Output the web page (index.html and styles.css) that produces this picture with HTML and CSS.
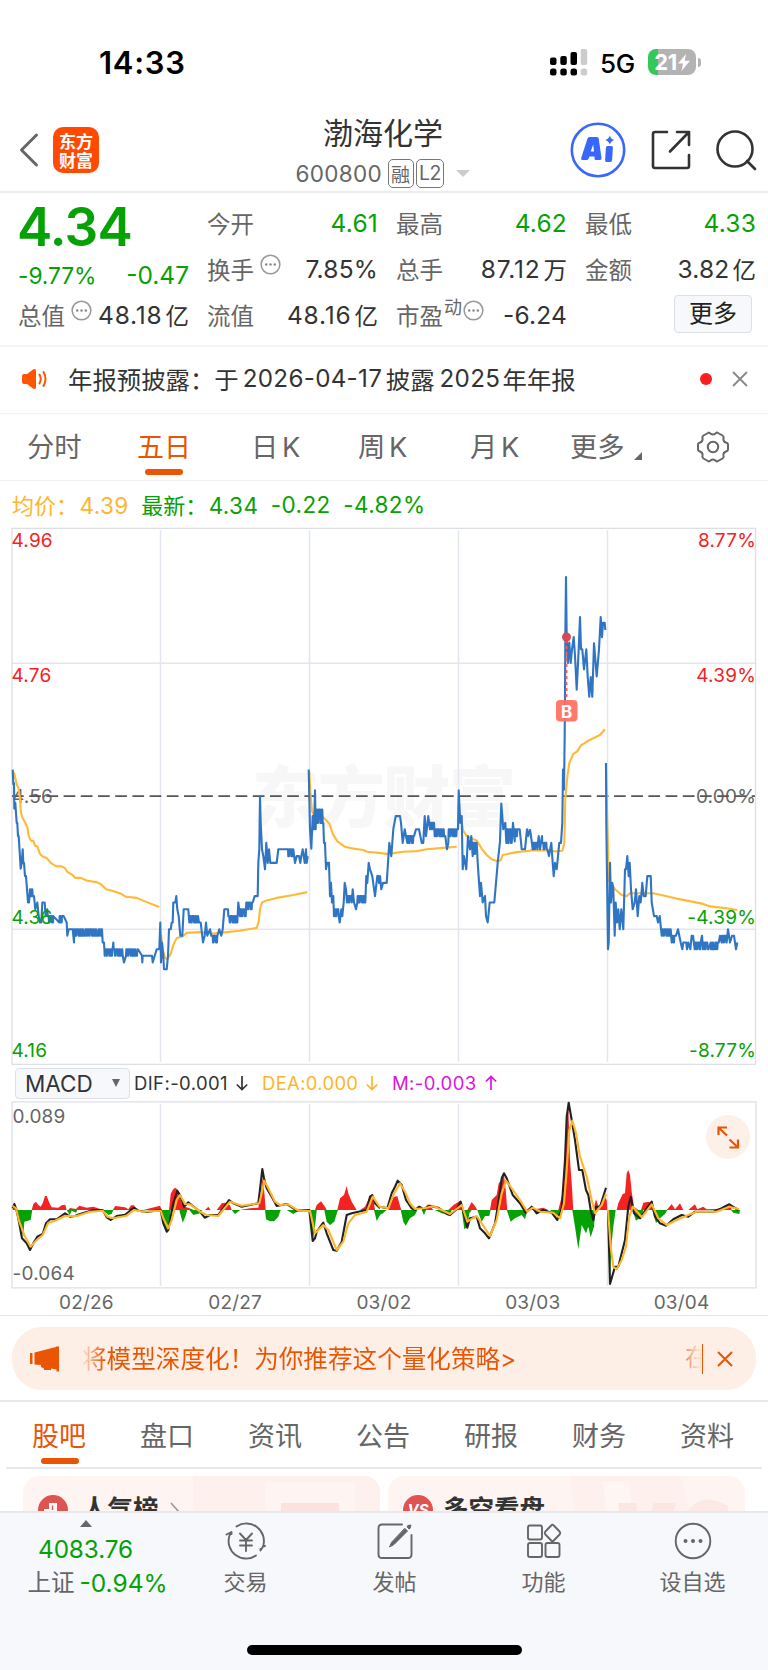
FILE: index.html
```html
<!DOCTYPE html>
<html lang="zh-CN">
<head>
<meta charset="utf-8">
<title>渤海化学 600800</title>
<link rel="stylesheet" href="styles.css">
</head>
<body>
<div class="screen">
  <div class="statusbar">
    <span class="clock">14:33</span>
    <div class="status-right">
      <svg class="signal" width="38" height="27" viewBox="0 0 38 27">
        <g fill="#000"><rect x="0" y="8.500" width="6.500" height="7.500" rx="2"/><rect x="10.300" y="7" width="6.500" height="9" rx="2"/><rect x="20.500" y="3" width="6.500" height="13" rx="2"/>
        <rect x="0" y="19.500" width="6.500" height="7" rx="2.500"/><rect x="10.300" y="19.500" width="6.500" height="7" rx="2.500"/><rect x="20.500" y="19.500" width="6.500" height="7" rx="2.500"/></g>
        <g fill="#ccc"><rect x="30.700" y="0" width="6.500" height="16" rx="2"/><rect x="30.700" y="19.500" width="6.500" height="7" rx="2.500"/></g>
      </svg>
      <span class="net">5G</span>
      <div class="battery"><span>21</span><svg width="12" height="17" viewBox="0 0 12 17"><path d="M8 0 0 9.500H5L3.500 17 12 6.800H6.700Z" fill="#fff"/></svg></div><i class="battery-tip"></i>
    </div>
  </div>

  <header class="header">
    <div class="head-left">
      <svg width="20" height="36" viewBox="0 0 20 36" fill="none" stroke="#666" stroke-width="3" stroke-linecap="round" stroke-linejoin="round"><path d="M17.500 3 2.500 18l15 15"/></svg>
      <div class="logo"><span>东方</span><span>财富</span></div>
    </div>
    <div class="head-title">
      <h1>渤海化学</h1>
      <div class="code-row"><span class="code">600800</span><span class="tag">融</span><span class="tag tag-l2">L2</span><i class="caret-down"></i></div>
    </div>
    <div class="head-right">
      <svg width="56" height="56" viewBox="0 0 56 56"><circle cx="28" cy="28" r="26.200" fill="none" stroke="#3767fb" stroke-width="2.600"/>
        <path fill="#3767fb" fill-rule="evenodd" d="M19.500 15h7.500q1.500 0 1.700 1.500L31.500 36q.2 2-1.500 2h-4q-1.500 0-1.500-1.500v-2h-5l-1 2.300q-.5 1.200-2 1.200h-4q-2 0-1.300-2L17.500 16.500q.5-1.500 2-1.500Zm3.700 7.500-2.500 7h3.300Z"/>
        <path fill="#3767fb" d="M37.500 24h4q1.500 0 1.400 1.500l-.8 12.500q-.2 2-1.800 2h-3.700q-1.600 0-1.500-1.700l.8-12.500q.1-1.800 1.600-1.800ZM39.800 13.500q1 3.600 4.500 4.500-3.500 1-4.500 4.500-1-3.500-4.500-4.500 3.500-1 4.500-4.500Z"/></svg>
      <svg width="40" height="40" viewBox="0 0 40 40" fill="none" stroke="#333" stroke-width="2.600" stroke-linecap="round" stroke-linejoin="round"><path d="M16 2H4Q2 2 2 4V36Q2 38 4 38H36Q38 38 38 36V25M26 2H38V15M37 3 19 21.500"/></svg>
      <svg width="42" height="42" viewBox="0 0 42 42" fill="none" stroke="#333" stroke-width="2.600" stroke-linecap="round"><circle cx="20" cy="20" r="17.500"/><path d="m32 32 8 8"/></svg>
    </div>
  </header>

  <section class="quote">
    <div class="quote-main">
      <div class="price">4.34</div>
      <div class="cell chg"><span>-9.77%</span><span>-0.47</span></div>
      <div class="cell"><label>总值</label><svg class="dots"><use href="#dots"/></svg><b class="wide">48.18<em>亿</em></b></div>
    </div>
    <div class="quote-col">
      <div class="cell"><label>今开</label><b class="down">4.61</b></div>
      <div class="cell"><label>换手</label><svg class="dots"><use href="#dots"/></svg><b>7.85%</b></div>
      <div class="cell"><label>流值</label><b class="wide">48.16<em>亿</em></b></div>
    </div>
    <div class="quote-col">
      <div class="cell"><label>最高</label><b class="down">4.62</b></div>
      <div class="cell"><label>总手</label><b class="wide">87.12<em>万</em></b></div>
      <div class="cell"><label>市盈</label><sup>动</sup><svg class="dots tight"><use href="#dots"/></svg><b>-6.24</b></div>
    </div>
    <div class="quote-col">
      <div class="cell"><label>最低</label><b class="down">4.33</b></div>
      <div class="cell"><label>金额</label><b>3.82<em>亿</em></b></div>
      <div class="cell"><button class="more">更多</button></div>
    </div>
  </section>

  <section class="notice">
    <svg class="horn" width="26" height="22" viewBox="0 0 26 22"><path d="M0 8Q0 6 2 6H5L11 1.500Q14 0 14 3V19Q14 22 11 20.500L5 16H2Q0 16 0 14Z" fill="#ff5500"/><path d="M17.500 6.500Q20 11 17.500 15.500M21.500 4Q25.500 11 21.500 18" fill="none" stroke="#ff5500" stroke-width="2" stroke-linecap="round"/></svg>
    <p>年报预披露：于<span class="n1">2026-04-17</span>披露<span class="n2">2025</span>年年报</p>
    <i class="dot"></i>
    <svg width="16" height="16" viewBox="0 0 16 16" stroke="#888" stroke-width="1.800"><path d="m1 1 14 14M15 1 1 15"/></svg>
  </section>

  <nav class="periods">
    <span class="p1">分时</span><span class="p2 active">五日</span><span class="p3">日 K</span><span class="p4">周 K</span><span class="p5">月 K</span><span class="p6">更多<i></i></span>
    <svg class="gear" width="32" height="32" viewBox="0 0 32 32" fill="none" stroke="#666" stroke-width="2" stroke-linejoin="round"><path d="M11 2Q12 1 13.500 2.500 16 4.500 18.500 2.500 20 1 21 2L25.500 4.500Q27 5.500 26.500 7.500 26 10.500 29 11.500 31 12 31 13.500V18.500Q31 20 29 20.500 26 21.500 26.500 24.500 27 26.500 25.500 27.500L21 30Q20 31 18.500 29.500 16 27.500 13.500 29.500 12 31 11 30L6.500 27.500Q5 26.500 5.500 24.500 6 21.500 3 20.500 1 20 1 18.500V13.500Q1 12 3 11.500 6 10.500 5.500 7.500 5 5.500 6.500 4.500Z"/><circle cx="16" cy="16" r="5.200"/></svg>
  </nav>

  <div class="legend"><span class="avg">均价：<b>4.39</b></span><span class="last">最新：<b>4.34</b></span><b>-0.22</b><b>-4.82%</b></div>

  <svg class="chart" width="768" height="538" viewBox="0 527 768 538">
    <text class="watermark" x="252" y="822" textLength="264">东方财富</text>
    <path class="grid" d="M12 663.200H755M12 929.200H755M160.500 530V1062M309.500 530V1062M458.500 530V1062M607.500 530V1062"/>
    <path class="frame" d="M12 528.300H755.500V1064.300H12Z"/>
    <g class="axis"><text x="11.500" y="547" class="red">4.96</text><text x="11.500" y="681.500" class="red">4.76</text><text x="12" y="802.500">4.56</text>
    <text x="756" y="547" class="red end">8.77%</text><text x="756" y="681.500" class="red end">4.39%</text><text x="756" y="802.500" class="end">0.00%</text></g>
    <path class="midline" d="M12 796.200H755"/>
    <g id="prices"></g>
    <g class="axis green"><text x="11.500" y="923.500">4.36</text><text x="11.500" y="1057">4.16</text><text x="756" y="923.500" class="end">-4.39%</text><text x="756" y="1057" class="end">-8.77%</text></g>
    <path d="M566.500 640V700" stroke="#ff5a50" stroke-width="1.800" stroke-dasharray="3 3"/>
    <circle cx="566.500" cy="637" r="4.500" fill="#d94a50"/>
    <rect x="556" y="700" width="21.500" height="21.500" rx="4" fill="#ff6f61" fill-opacity=".92"/>
    <text class="buy" x="566.700" y="717.500">B</text>
  </svg>

  <div class="indicator">
    <div class="select">MACD<i></i></div>
    <span class="i1">DIF:-0.001</span><svg class="ar"><use href="#arrow"/></svg>
    <span class="i2">DEA:0.000</span><svg class="ar yellow"><use href="#arrow"/></svg>
    <span class="i3">M:-0.003</span><svg class="ar pink"><use href="#arrow"/></svg>
  </div>

  <svg class="macd" width="768" height="188" viewBox="0 1101 768 188">
    <path class="grid" d="M160.500 1104V1286M309.500 1104V1286M458.500 1104V1286M607.500 1104V1286"/>
    <path class="frame" d="M12 1101.800H756V1287.800H12Z"/>
    <g id="macd"></g>
    <g class="axis small"><text x="12.500" y="1122.500">0.089</text><text x="12.500" y="1279.500">-0.064</text></g>
    <circle cx="728" cy="1137" r="22" fill="#fdf0e9"/>
    <path d="M718.500 1135V1127.500H727M719 1128l8 7.500M738 1139.500V1147.500H729.500M737.500 1147l-8-7.500" fill="none" stroke="#ea5504" stroke-width="2.200"/>
  </svg>
  <div class="dates"><span>02/26</span><span>02/27</span><span>03/02</span><span>03/03</span><span>03/04</span></div>

  <section class="promo-wrap">
    <div class="promo">
      <svg width="30" height="26" viewBox="0 0 30 26" fill="#ea5504"><path d="M0 7H2.500V18H0ZM4.500 6.500 26 1V.5H29V25.500H26.500V23.500L21 22.500V24H14V22.500L11 21V19L4.500 18.500Z"/></svg>
      <p>将模型深度化！为你推荐这个量化策略&gt;</p>
      <span class="peek">在</span>
      <svg class="x" width="16" height="16" viewBox="0 0 16 16" stroke="#ea5504" stroke-width="2"><path d="m1 1 14 14M15 1 1 15"/></svg>
    </div>
  </section>

  <nav class="tabs"><span class="active">股吧</span><span>盘口</span><span>资讯</span><span>公告</span><span>研报</span><span>财务</span><span>资料</span></nav>

  <section class="cards">
    <div class="card">
      <svg class="badge" width="30" height="30" viewBox="0 0 30 30"><circle cx="15" cy="15" r="15" fill="#df5350"/><path d="M6 25V14H11V8H19V16H24V25Z" fill="#fff"/><path d="M14.500 10.500V15" stroke="#df5350" stroke-width="1.500"/></svg>
      <strong>人气榜</strong>
      <svg width="10" height="20" viewBox="0 0 10 20" fill="none" stroke="#999" stroke-width="1.600"><path d="m1 1 8 9-8 9"/></svg>
      <div class="block b1"></div><div class="block b2"><i></i></div>
    </div>
    <div class="card">
      <svg class="badge" width="30" height="30" viewBox="0 0 30 30"><circle cx="15" cy="15" r="15" fill="#df5350"/><text x="15" y="20" text-anchor="middle" class="vs">VS</text></svg>
      <strong>多空看盘</strong>
      <svg class="bigvs" width="175" height="70" viewBox="0 0 175 70"><path d="M0 0H110L130 70H10Z" fill="#fdf0ed"/><path d="M32 5H58L68 70H42Z" fill="#fef6f3"/><path d="M48 27H66L72 70H54ZM84 27H106L92 70H70Z" fill="#fce6e2"/><path d="M158 30Q134 16 120 32 108 50 130 70H160Z" fill="#fce8e4"/></svg>
    </div>
  </section>

  <footer class="bottom">
    <div class="index"><i></i><b>4083.76</b><p>上证<b>-0.94%</b></p></div>
    <div class="item"><svg width="42" height="38" viewBox="0 0 42 38" fill="none" stroke="#666" stroke-width="1.900" stroke-linecap="round" stroke-linejoin="round"><path d="M11.500 4.500A17.500 17.500 0 0 1 38 24.500L35.500 28.500V27M38 24.500l2-.5M31 33.500A17.500 17.500 0 0 1 4.500 13.500L6.500 10V12M1.500 12.500 6.500 10M15 11.500l6 6.500 6-6.500M21 18V29M15 18.500H27M15 23.500H27"/></svg><span>交易</span></div>
    <div class="item"><svg width="42" height="38" viewBox="0 0 42 38" fill="none" stroke="#666" stroke-width="1.900" stroke-linecap="round"><path d="M28 2.500H8Q4.500 2.500 4.500 6V32.500Q4.500 36 8 36H34Q37.500 36 37.500 32.500V13"/><path d="M34 3.500l3-.500-1 3.500-1 .5-1.500-1.500ZM31 6.500 33.500 9 20 22.500 15.500 25 17.500 20.500Z" fill="#666" stroke-width="1"/></svg><span>发帖</span></div>
    <div class="item"><svg width="42" height="38" viewBox="0 0 42 38" fill="none" stroke="#666" stroke-width="1.900" stroke-linejoin="round"><rect x="5" y="3.500" width="14" height="14" rx="2"/><rect x="5" y="21" width="14" height="14" rx="2"/><rect x="22.500" y="21" width="14" height="14" rx="2"/><path d="M28.200 3.500q1.300-1.500 2.600 0l5.800 6q1.200 1.500 0 3l-5.800 6q-1.300 1.300-2.600 0l-5.800-6q-1.200-1.500 0-3Z"/></svg><span>功能</span></div>
    <div class="item"><svg width="42" height="38" viewBox="0 0 42 38"><circle cx="21" cy="19" r="17.300" fill="none" stroke="#666" stroke-width="1.900"/><g fill="#666"><circle cx="13.500" cy="19" r="2"/><circle cx="21" cy="19" r="2"/><circle cx="28.500" cy="19" r="2"/></g></svg><span>设自选</span></div>
    <div class="homebar"></div>
  </footer>
</div>

<svg width="0" height="0" class="defs">
  <symbol id="dots" viewBox="0 0 22 22"><circle cx="11" cy="11" r="9.800" fill="none" stroke="#999" stroke-width="1.600"/><g fill="#888"><circle cx="6.500" cy="11" r="1.300"/><circle cx="11" cy="11" r="1.300"/><circle cx="15.500" cy="11" r="1.300"/></g></symbol>
  <symbol id="arrow" viewBox="0 0 12 16"><path d="M6 1V14.500M.8 9.500 6 14.500 11.200 9.500" fill="none" stroke="currentColor" stroke-width="1.700"/></symbol>
</svg>
<script src="charts.js"></script>
</body>
</html>
```
FILE: styles.css
```css
* { box-sizing: border-box; }
body { margin: 0; background: #fff; color: #333; font-family: Inter, "Noto Sans CJK SC", sans-serif; }
h1, p { margin: 0; font-weight: 400; }
b, em, i { font-weight: 400; font-style: normal; }
svg { display: block; flex: none; }
.defs { display: none; }
.screen { width: 768px; height: 1670px; overflow: hidden; display: flex; flex-direction: column; }
.screen > * { flex: none; }
span, b, label, p, h1 { white-space: nowrap; }

.statusbar { height: 100px; padding: 24px 67px 0 99px; display: flex; align-items: center; justify-content: space-between; color: #000; }
.clock { font-size: 31px; font-weight: 600; letter-spacing: .7px; }
.status-right { display: flex; align-items: center; }
.net { margin: 2px 0 0 12px; width: 48px; font-size: 26px; font-weight: 500; letter-spacing: -.3px; }
.battery { width: 48px; height: 26px; border-radius: 8px; background: linear-gradient(90deg, #34c759 0 10px, #b3b3b3 10px); color: #fff; display: flex; align-items: center; justify-content: center; gap: 1px; font-size: 22px; font-weight: 700; letter-spacing: -.5px; }
.battery-tip { width: 3px; height: 9px; margin-left: 2px; background: #b3b3b3; border-radius: 0 3px 3px 0; }

.header { height: 93px; border-bottom: 2px solid #ededed; padding: 0 11px 0 19px; display: grid; grid-template-columns: 188px 1fr 188px; }
.head-left { display: flex; align-items: center; gap: 14px; padding-top: 8px; }
.logo { width: 46px; height: 46px; border-radius: 10px; background: #ff4a00; color: #fff; display: flex; flex-direction: column; align-items: center; justify-content: center; font: 700 17px/19px "Noto Sans CJK SC", sans-serif; }
.head-title { display: flex; flex-direction: column; align-items: center; padding: 14px 10px 0 0; }
.head-title h1 { font-size: 30px; line-height: 38px; color: #333; }
.code-row { display: flex; align-items: center; height: 30px; margin: 6px 0 0 -1px; color: #666; }
.code { font-size: 22.5px; letter-spacing: .3px; width: 92px; }
.tag { border: 1.5px solid #777; border-radius: 5px; width: 26px; height: 29px; margin-right: 2.500px; font-size: 19px; display: flex; align-items: center; justify-content: center; }
.tag-l2 { width: 28px; font-size: 19.5px; letter-spacing: -.5px; }
.caret-down { border: 7px solid transparent; border-top: 7.5px solid #ccc; border-bottom: 0; margin-left: 9px; }
.head-right { display: flex; align-items: center; justify-content: flex-end; padding-top: 8px; gap: 24.5px; }

.quote { height: 154px; border-bottom: 2px solid #f5f5f5; padding: 7px 12.500px 0 18px; display: grid; grid-template-columns: repeat(4, 170px); column-gap: 19px; font-size: 24.5px; }
.cell { height: 46px; display: flex; align-items: center; }
.cell label { color: #666; font-size: 23.5px; margin-top: -1px; }
.cell b { margin: 0 -1px 0 auto; letter-spacing: .2px; display: flex; align-items: center; }
.cell .wide { letter-spacing: .8px; }
.cell em { font-size: 23.500px; margin-left: 3px; letter-spacing: 0; }
.cell .down, .chg, .price { color: #05a105; }
.dots { width: 21px; height: 21px; margin: -9px 0 0 6px; }
.dots.tight { margin-left: 1px; }
.cell sup { font-size: 18px; color: #666; line-height: 1; margin: -14px 0 0 1px; vertical-align: baseline; }
.price { height: 50px; font-size: 53px; line-height: 55px; font-weight: 600; letter-spacing: -.8px; margin-left: -1px; }
.chg { justify-content: space-between; height: 42px; padding-top: 8px; margin-right: -1px; }
.chg span:first-child { font-size: 22.800px; letter-spacing: -.1px; }
.more { margin: -3px 3px 0 auto; width: 78px; height: 38px; padding: 0 0 3px; border: 1.5px solid #dcdfe5; border-radius: 4px; background: #f6f8fb; color: #222; font: 24px/32px "Noto Sans CJK SC", sans-serif; }

.notice { height: 67px; border-bottom: 1.5px solid #f2f2f2; padding: 0 20px 2px 22px; display: flex; align-items: center; }
.notice p { margin: -2px 0 0 20px; flex: 1; font-size: 24.4px; display: flex; align-items: center; }
.n1 { margin-left: 4px; width: 143px; font-size: 24.2px; letter-spacing: .3px; }
.n2 { margin-left: 5px; width: 63px; font-size: 24.200px; letter-spacing: .3px; }
.dot { width: 12px; height: 12px; border-radius: 50%; background: #fa1e1e; margin-right: 20px; }

.periods { height: 67px; border-bottom: 1.500px solid #f2f2f2; display: flex; align-items: center; font-size: 27.3px; color: #666; padding-left: 27px; }
.periods span { display: flex; align-items: center; height: 66px; padding-bottom: 4px; word-spacing: -4px; }
.p1 { width: 110px; } .p2 { width: 114px; } .p3 { width: 107px; } .p4 { width: 112px; } .p5 { width: 100px; } .p6 { width: 127px; }
.periods .active { position: relative; color: #ea5504; font-size: 27px; }
.active::after { content: ""; position: absolute; left: 8px; bottom: 5px; width: 38px; height: 6px; border-radius: 3px; background: #ea5504; }
.p6 i { border: 4.5px solid transparent; border-right-color: #666; border-bottom-color: #666; margin: 22px 0 0 9px; }

.legend { height: 46px; padding: 0 0 0 12px; display: flex; align-items: center; font-size: 22px; color: #05a105; gap: 12.5px; }
.legend .avg { color: #ffb52b; }
.legend b { font-size: 22.5px; letter-spacing: .4px; }
.legend span b { margin-left: 1.5px; }
.grid { stroke: #e3e6f0; stroke-width: 1.5; fill: none; }
.frame { stroke: #dcdfe5; stroke-width: 1.3; fill: none; }
.midline { stroke: #555; stroke-width: 1.7; stroke-dasharray: 11.700 5.500; }
.axis { font-size: 19px; fill: #666; letter-spacing: .2px; }
.axis .red { fill: #f52222; }
.axis.green { fill: #05a105; }
.end { text-anchor: end; }
.watermark { font: 900 67px "Noto Sans CJK SC", sans-serif; fill: #f7f7f7; }
.buy { font-size: 17px; font-weight: 700; fill: #fff; text-anchor: middle; }
.line { fill: none; stroke-width: 2.1; stroke-linejoin: round; }

.indicator { height: 36px; padding-left: 15px; display: flex; align-items: center; font-size: 18.5px; }
.select { width: 115px; height: 31px; margin: 0 4px 0 0; padding-left: 9px; border: 1.500px solid #dcdfe5; border-radius: 4px; background: #f6f8fb; font-size: 22.5px; display: flex; align-items: center; }
.select i { border: 4.500px solid transparent; border-top: 8px solid #666; border-bottom: 0; margin-left: auto; margin-right: 9px; }
.ar { width: 12px; height: 16px; }
.i1 { width: 102px; letter-spacing: .4px; } .i2 { width: 104px; margin-left: 14px; color: #ffb52b; letter-spacing: .3px; } .i3 { width: 93px; margin-left: 14px; color: #dc14dc; letter-spacing: .4px; }
.yellow { color: #ffb52b; } .pink { color: #dc14dc; transform: scaleY(-1); }
.dates { height: 27px; border-bottom: 1.500px solid #e3e5ea; padding: 0 12px; display: flex; align-items: center; font-size: 19px; color: #666; letter-spacing: .2px; }
.dates span { flex: 1; text-align: center; }

.promo-wrap { height: 86px; border-bottom: 2px solid #e9e9eb; padding: 11px 12px 0; }
.promo { height: 63px; border-radius: 30px; background: #fdeee6; color: #ea5504; padding: 0 23px 0 18px; display: flex; align-items: center; }
.promo p { font-size: 24.600px; margin: -4px 0 0 22px; flex: 1; background: linear-gradient(90deg, #fbd3bf 0 3px, #ea5504 22px); -webkit-background-clip: text; background-clip: text; color: transparent; }
.peek { width: 18px; height: 30px; line-height: 28px; overflow: hidden; font-size: 24px; border-right: 1.500px solid #ea5504; background: linear-gradient(90deg, #f0844e, #fbe0d2 13px); -webkit-background-clip: text; background-clip: text; color: transparent; }
.promo .x { margin-left: 14px; }

.tabs { height: 67px; margin: 0 6px; border-bottom: 2px solid #e9e9eb; display: flex; font-size: 27px; color: #666; }
.tabs span { position: relative; width: 108px; height: 65px; padding: 0 2px 1px 0; display: flex; align-items: center; justify-content: center; }
.tabs .active { color: #ea5504; }
.tabs .active::after { left: 35px; bottom: 3px; }

.cards { height: 42px; padding: 7px 23px 0; display: flex; gap: 8px; overflow: hidden; }
.card { position: relative; width: 357px; height: 70px; flex: none; border-radius: 16px; background: #fef5f2; padding: 19px 0 0 15px; display: flex; overflow: hidden; }
.card strong { font-size: 25.5px; font-weight: 700; line-height: 32px; margin: -2px 11px 0 14px; color: #333; position: relative; z-index: 1; }
.card strong + svg { margin-top: 7px; }
.card:last-child strong { margin-left: 10px; }
.vs { font: italic 700 15px Inter, sans-serif; fill: #fff; }
.block { position: absolute; top: 0; }
.b1 { left: 170px; width: 187px; height: 70px; background: #fdf0ed; }
.b2 { left: 242px; width: 90px; height: 70px; top: 6px; background: #fef5f2; padding: 21px 16px; }
.b2 i { display: block; height: 50px; background: #fce2de; }
.card .bigvs { position: absolute; right: 0; top: 0; margin: 0; }

.bottom { position: relative; flex: 1 0 0 !important; border-top: 2px solid #e6e8eb; background: #f6f8fb; display: flex; color: #666; font-size: 22px; }
.index { width: 171px; display: flex; flex-direction: column; align-items: center; padding-top: 7px; }
.index i { border: 6.500px solid transparent; border-bottom: 7px solid #666; border-top: 0; }
.index > b { font-size: 24.3px; line-height: 30px; margin-top: 7px; color: #05a105; letter-spacing: -.1px; }
.index p { margin: 2px -10px 0 14px; line-height: 34px; font-size: 23.500px; display: flex; align-items: center; }
.index p b { color: #05a105; font-size: 24.5px; margin-left: 5px; }
.item { width: 149px; display: flex; flex-direction: column; align-items: center; padding-top: 9px; }
.item span { line-height: 34px; margin-top: 5px; }
.homebar { position: absolute; left: 247px; bottom: 15px; width: 275px; height: 10px; border-radius: 5px; background: #000; }
```
FILE: charts.js
```js
const NS = 'http://www.w3.org/2000/svg';

// Each token is "x,y"; "M" starts a new stroke; "~x,a,b" alternates between two levels up to x.
function trace(tokens, ox, oy, sy) {
  let out = '', x = 0, fresh = true;
  const put = (px, py) => {
    out += (fresh ? 'M' : 'L') + (ox + px / 3).toFixed(1) + ' ' + (oy + py / sy).toFixed(1);
    fresh = false;
    x = px;
  };
  for (const t of tokens.trim().split(/\s+/)) {
    if (t === 'M') { fresh = true; continue; }
    if (t[0] === '~') {
      const [end, a, b] = t.slice(1).split(',').map(Number);
      let k = 0;
      while (x < end) {
        const y = k % 2 ? b : a;
        put(x + 1, y);
        put(Math.min(end, x + [3, 2, 5, 3, 2][k % 5]), y);
        k++;
      }
    } else {
      put(...t.split(',').map(Number));
    }
  }
  return out;
}

function add(id, d, attrs) {
  const p = document.createElementNS(NS, 'path');
  p.setAttribute('d', d);
  for (const k in attrs) p.setAttribute(k, attrs[k]);
  document.getElementById(id).appendChild(p);
}

const avg = [
  [0, '38,705 43,710 50,740 56,752 60,780 63,820 68,835 74,845 82,860 86,885 93,898 100,898 105,912 112,914 120,935 128,942 140,946 152,960 168,969 185,970 195,975 202,985 215,992 226,1002 242,1002 262,1010 290,1014 303,1020 318,1034 335,1038 360,1045 378,1055 410,1058 440,1070 478,1084 M 483,1160 488,1202 495,1226 502,1230 512,1215 520,1190 530,1170 548,1166 560,1156 600,1154 640,1158 680,1154 720,1150 770,1142 776,1125 780,1090 786,1071 800,1065 830,1058 880,1050 922,1042'],
  [300, '28,705 31,760 36,815 44,830 66,829 78,840 88,850 98,878 112,900 135,915 160,920 190,924 200,929 235,932 260,935 285,932 310,929 350,927 380,922 430,918 470,915 M 480,830 485,845 490,870 500,885 515,892 530,897 545,920 560,938 575,950 590,955 602,953 608,938 650,930 690,926'],
  [530, '0,925 50,925 75,928 97,926 103,905 106,780 112,720 118,680 130,655 142,648 152,632 175,618 210,602 225,586 M 228,700 233,880 236,1010 245,1018 255,1034 275,1050 290,1053 300,1045 370,1045 440,1060 520,1075 540,1082 590,1087 622,1092']
];
const last = [
  [0, '38,699 40,740 42,737 43,808 46,792 50,848 52,848 54,885 56,885 62,976 65,960 68,922 70,960 72,960 75,997 78,997 81,1034 84,1071 87,1071 90,1034 ~100,1053,1034 102,1053 106,1090 112,1071 116,1109 120,1127 124,1127 127,1071 134,1071 137,1109 142,1090 ~160,1109,1127 178,1127 ~191,1109,1127 200,1127 202,1164 206,1146 218,1146 222,1183 ~304,1146,1164 306,1146 308,1183 312,1183 314,1220 ~336,1202,1220 340,1183 ~368,1202,1220 372,1239 378,1220 ~414,1202,1220 426,1220 427,1239 428,1220 456,1220 458,1239 464,1220 470,1202 478,1202 481,1127 483,1239 486,1183 490,1220 492,1258 500,1258 504,1220 507,1146 512,1146 515,1127 518,1127 520,1071 526,1071 529,1053 532,1090 536,1109 541,1164 547,1164 551,1090 565,1090 568,1127 ~594,1109,1127 597,1127 602,1127 609,1183 614,1164 618,1127 622,1164 630,1146 634,1164 ~652,1164,1183 658,1146 664,1164 668,1146 673,1090 684,1090 ~712,1109,1127 715,1071 720,1109 ~738,1090,1109 ~758,1071,1090 764,1053 773,1053 775,960 778,922 780,773 782,848 786,922 790,941 795,978 799,904 803,960 807,922 811,960 830,960 835,922 860,922 ~880,922,941 885,960 890,941 897,941 901,960 904,941 908,922 911,941 914,960 918,922 920,960 923,941'],
  [300, '26,699 30,866 34,920 38,829 42,866 45,757 47,866 ~70,811,848 72,904 75,904 78,978 82,960 87,960 90,1053 93,1016 96,1071 100,1053 102,1109 ~116,1090,1109 119,1127 124,1090 127,1109 131,1071 134,1016 138,1034 141,1071 ~155,1053,1071 158,1034 162,1071 168,1090 172,1071 ~196,1053,1071 199,997 202,1016 206,960 210,978 217,997 225,1053 232,997 ~240,997,1016 244,1034 249,1016 260,1016 264,960 268,904 274,941 280,866 287,829 300,829 303,848 308,904 314,866 322,904 ~342,885,904 348,866 357,866 365,904 370,904 374,829 378,885 385,829 390,866 ~402,848,866 404,885 ~436,866,885 441,922 445,904 ~470,866,885 474,866 476,757 481,848 485,829 488,978 492,941 499,978 504,885 510,922 514,885 518,941 ~530,904,935 533,960 540,1053 543,1016 548,1071 555,1053 558,1109 563,1127 569,1071 583,1071 588,1016 593,960 600,900 604,794 610,866 616,848 619,904 ~635,866,904 639,848 644,900 ~655,866,885 659,866 665,922 675,922 681,866 685,885 690,866'],
  [530, '0,866 3,885 8,922 ~22,904,922 26,885 30,922 36,885 ~52,904,922 57,941 64,904 68,960 71,997 75,960 80,978 88,904 93,904 97,848 99,699 102,755 104,600 105,500 106,330 108,160 110,325 114,400 118,343 122,400 126,362 131,328 135,380 140,475 146,362 150,272 153,362 157,362 162,418 169,362 173,440 178,495 182,440 187,495 192,345 200,438 207,362 212,272 216,328 219,288 224,288 226,308 M 228,680 229,850 234,1202 236,1183 240,960 243,1071 247,1016 250,1034 254,1164 257,1071 261,1127 265,1090 269,1146 274,1090 280,1146 285,978 288,978 292,941 296,997 299,960 303,1034 308,1090 314,1071 318,1034 323,1109 328,1053 332,1071 337,1016 341,1053 347,1053 352,997 362,997 365,1071 372,1109 380,1109 384,1127 389,1109 395,1164 ~422,1146,1164 425,1183 ~438,1164,1183 444,1146 452,1183 457,1202 460,1183 469,1183 471,1202 475,1183 481,1202 485,1164 489,1164 494,1202 ~512,1183,1202 516,1164 519,1202 ~535,1183,1202 542,1183 ~566,1202,1183 570,1164 575,1183 ~590,1164,1183 594,1146 600,1183 606,1164 612,1164 618,1202 622,1183']
];
for (const [ox, t] of avg) add('prices', trace(t, ox, 520, 2.8), { class: 'line', stroke: '#ffb937' });
for (const [ox, t] of last) add('prices', trace(t, ox, 520, 2.8), { class: 'line', stroke: '#3075c4' });

const red = [
  [0, '38,450 43,427 48,440 52,450 M 95,450 100,432 108,425 115,435 122,440 128,430 135,408 140,408 148,428 155,442 175,443 185,436 196,434 200,450 M 205,450 210,444 228,447 238,437 260,443 280,440 310,450 M 338,450 346,438 375,442 385,448 393,436 402,436 410,450 M 430,450 450,445 480,437 485,450 M 507,450 512,402 518,390 525,383 530,386 536,400 545,430 555,440 575,447 580,450 M 615,450 625,440 632,450 M 650,450 665,430 675,428 690,436 695,450 M 720,450 750,445 775,443 783,400 788,350 793,395 797,450 M 945,450 950,435 963,424 975,440 980,450 M 1012,450 1020,415 1032,405 1040,378 1045,400 1055,425 1070,450 M 1080,450 1095,440 1110,408 1118,402 1125,450'],
  [380, '25,450 40,412 52,408 58,430 64,450 M 125,450 145,433 160,450 M 205,450 220,436 240,422 250,450 M 262,450 275,426 285,438 292,450 M 330,450 335,420 350,405 356,370 364,360 372,345 377,390 382,450 M 440,450 455,440 465,448 490,443 505,450 M 535,450 545,410 552,350 560,180 565,135 570,300 575,370 580,450 M 640,450 648,418 655,438 665,430 672,405 680,420 682,450 M 710,450 715,430 728,402 735,400 740,340 745,330 750,345 755,395 762,440 775,450 M 783,450 790,428 805,425 815,430 820,450 M 860,450 875,432 885,448 900,430 910,450 M 925,450 945,433 952,448 970,440 980,448 1020,446 1035,436 1052,440 1055,450']
];
const green = [
  [0, '50,450 58,485 70,530 73,485 92,480 97,450 M 200,450 209,465 215,452 228,458 232,450 M 310,450 325,465 335,462 340,450 M 482,450 490,490 500,510 508,490 512,450 M 538,450 548,488 556,470 562,450 M 568,450 580,465 600,460 606,450 M 695,450 705,462 718,452 720,450 M 795,450 798,478 810,484 822,484 835,470 842,450 M 860,450 880,462 900,450 M 930,450 938,545 945,500 950,450 M 973,450 980,485 990,495 1003,485 1012,455 1015,450 M 1122,450 1130,483 1140,465 1160,450'],
  [380, '0,450 8,462 15,450 M 62,450 70,485 77,497 90,475 105,465 112,450 M 125,450 132,465 138,450 M 165,450 185,460 210,465 215,450 M 245,450 253,508 262,500 268,460 275,450 M 292,450 305,485 315,468 328,468 332,450 M 380,450 392,485 405,475 425,465 435,478 442,450 M 460,450 470,463 480,450 M 510,450 535,470 540,450 M 577,450 585,500 595,568 605,495 618,520 625,500 632,532 642,500 646,450 M 684,450 690,675 694,560 700,500 707,450 M 757,450 768,482 785,470 790,450 M 817,450 828,490 840,475 855,462 862,450 M 1053,450 1060,458 1078,462 1080,450']
];
const dif = [
  [0, '38,445 43,432 48,445 55,475 66,535 80,550 90,570 100,550 112,530 128,522 138,490 150,478 170,478 195,460 210,470 225,468 240,462 280,450 308,450 320,472 332,480 350,468 375,464 390,452 402,443 415,452 440,456 482,450 490,490 500,515 505,510 520,430 532,392 540,405 552,440 565,427 585,443 600,455 614,473 630,465 655,465 670,445 687,420 700,430 725,440 775,430 782,370 787,327 792,355 800,385 815,410 830,438 860,432 890,452 928,450 938,543 945,535 950,515 970,488 980,520 1000,570 1010,572 1025,545 1040,465 1055,460 1075,455 1100,450 1110,410 1117,405 1125,430 1140,445'],
  [380, '0,440 22,445 35,400 45,380 53,362 65,375 78,420 95,445 105,450 118,440 132,448 150,437 175,443 200,462 210,465 230,448 242,425 250,455 262,503 270,475 290,470 300,505 315,520 327,535 345,490 355,430 365,355 372,340 380,355 398,405 420,430 437,458 455,440 470,460 490,450 515,458 532,480 545,445 555,300 560,170 566,128 575,180 585,240 597,330 607,330 618,390 625,405 632,450 640,480 648,440 660,440 678,383 M 684,450 690,672 705,620 715,620 735,540 745,440 752,410 762,460 780,475 800,445 815,425 825,470 840,490 858,497 880,478 905,465 925,470 945,455 1000,455 1025,445 1048,433 1075,450']
];
const dea = [
  [0, '38,438 48,445 58,485 75,530 92,560 110,540 128,525 145,488 165,482 195,468 230,468 270,455 308,452 322,470 340,475 380,467 402,450 430,455 482,452 490,475 505,505 515,480 530,420 540,405 555,432 570,433 600,455 620,465 655,468 690,425 725,437 778,430 785,400 793,362 805,385 825,425 840,435 865,433 895,452 930,453 945,520 970,495 985,510 1010,570 1030,545 1045,490 1065,465 1100,455 1118,410 1135,435 1140,442'],
  [380, '0,440 25,445 40,405 60,370 75,395 90,430 105,447 135,445 160,438 210,462 245,435 262,485 290,468 305,490 330,528 350,480 365,400 378,362 395,385 420,420 442,455 458,443 480,455 520,458 540,475 552,430 560,330 568,210 577,182 587,215 600,290 620,350 635,420 645,460 665,435 678,402 M 684,450 692,560 700,620 710,628 725,600 738,560 748,470 758,440 785,472 815,433 835,475 860,495 890,480 925,465 950,455 1010,455 1048,440 1078,448']
];
for (const [ox, t] of red) add('macd', trace(t, ox, 1060, 3), { fill: '#f52222' });
for (const [ox, t] of green) add('macd', trace(t, ox, 1060, 3), { fill: '#05a105' });
for (const [ox, t] of dif) add('macd', trace(t, ox, 1060, 3), { class: 'line', stroke: '#222' });
for (const [ox, t] of dea) add('macd', trace(t, ox, 1060, 3), { class: 'line', stroke: '#ffb52b' });
```
